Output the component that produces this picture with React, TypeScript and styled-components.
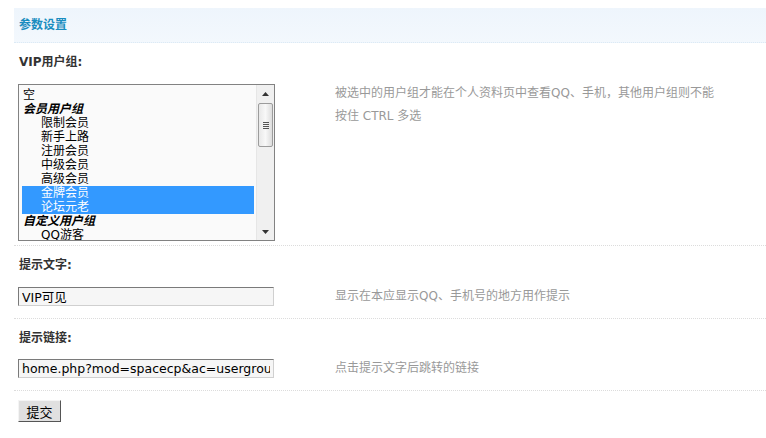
import React from 'react';
import styled, { createGlobalStyle } from 'styled-components';

const GlobalStyle = createGlobalStyle`
  body {
    margin: 0;
    background: #fff;
    font: 12px/1.5 Tahoma, "DejaVu Sans", "Noto Sans CJK SC", sans-serif;
    color: #333;
  }
`;

const Page = styled.div`
  padding: 8px 0 0 14px;
`;

const Header = styled.div`
  height: 34px;
  line-height: 35px;
  padding-left: 5px;
  background: linear-gradient(#eef5fc, #f3f8fd);
  border-bottom: 1px dotted #dceaf5;
  color: #1a8dc0;
  font-weight: bold;
  font-size: 12px;
`;

const Label = styled.div<{ $bottom?: number }>`
  padding: 12px 5px ${p => p.$bottom ?? 15}px;
  line-height: 14px;
  font-weight: bold;
  color: #333;
`;

const FieldRow = styled.div<{ $bottom: number }>`
  display: grid;
  grid-template-columns: 317px 1fr;
  padding: 0 0 ${p => p.$bottom}px 4px;
  border-bottom: 1px dotted #dcdcdc;
`;

const Tip = styled.div`
  margin-top: -2px;
  line-height: 23px;
  color: #999;
`;

const Listbox = styled.div`
  display: flex;
  width: 255px;
  height: 155px;
  border: 1px solid #828282;
  background: #fafafa;
  overflow: hidden;
`;

const Options = styled.div`
  flex: 1;
  padding: 3px 2px 0 3px;
  overflow: hidden;
`;

const Option = styled.div<{ $indent?: boolean; $group?: boolean; $selected?: boolean }>`
  height: 14px;
  line-height: 14px;
  padding-left: ${p => (p.$indent ? 19 : 1)}px;
  white-space: nowrap;
  font-weight: ${p => (p.$group ? 'bold' : 'normal')};
  font-style: ${p => (p.$group ? 'italic' : 'normal')};
  background: ${p => (p.$selected ? '#3399ff' : 'transparent')};
  color: ${p => (p.$selected ? '#fff' : '#000')};
`;

const Scrollbar = styled.div`
  width: 17px;
  display: flex;
  flex-direction: column;
  background: #f0f0f0;
  border-left: 1px solid #e6e6e6;
`;

const ArrowButton = styled.div`
  height: 17px;
  display: flex;
  align-items: center;
  justify-content: center;
`;

const Track = styled.div`
  flex: 1;
  padding-top: 1px;
`;

const Thumb = styled.div`
  height: 42px;
  margin: 0 1px;
  border: 1px solid #9c9c9c;
  border-radius: 2px;
  background: linear-gradient(90deg, #e8e8e8, #f8f8f8 50%, #dcdcdc);
  display: flex;
  flex-direction: column;
  align-items: center;
  justify-content: center;
  gap: 1px;
`;

const Grip = styled.span`
  width: 6px;
  height: 1px;
  background: #555;
`;

const TextInput = styled.input`
  box-sizing: border-box;
  width: 256px;
  height: 19px;
  padding: 0 3px;
  border: 1px solid;
  border-color: #7a7a7a #d0d0d0 #d0d0d0 #7a7a7a;
  background: #f6f6f6;
  font: 12.5px "DejaVu Sans", "Noto Sans CJK SC", sans-serif;
  color: #000;
  outline: none;
`;

const ButtonRow = styled.div`
  padding: 9px 0 0 4px;
`;

const SubmitButton = styled.button`
  width: 43px;
  height: 22px;
  padding: 0;
  background: #e0e0e0;
  border: 1px solid;
  border-color: #f4f4f4 #555 #555 #f4f4f4;
  font: 13px "Noto Sans CJK SC", sans-serif;
  color: #000;
`;

const Arrow = ({ up }: { up?: boolean }) => (
  <svg width="7" height="4" viewBox="0 0 7 4">
    <path d={up ? 'M0 4 L3.5 0 L7 4 Z' : 'M0 0 L3.5 4 L7 0 Z'} fill="#333" />
  </svg>
);

const groups: { text: string; indent?: boolean; group?: boolean; selected?: boolean }[] = [
  { text: '空' },
  { text: '会员用户组', group: true },
  { text: '限制会员', indent: true },
  { text: '新手上路', indent: true },
  { text: '注册会员', indent: true },
  { text: '中级会员', indent: true },
  { text: '高级会员', indent: true },
  { text: '金牌会员', indent: true, selected: true },
  { text: '论坛元老', indent: true, selected: true },
  { text: '自定义用户组', group: true },
  { text: 'QQ游客', indent: true },
];

const App = () => (
  <Page>
    <GlobalStyle />
    <Header>参数设置</Header>

    <Label>VIP用户组:</Label>
    <FieldRow $bottom={4}>
      <Listbox>
        <Options>
          {groups.map(g => (
            <Option key={g.text} $indent={g.indent} $group={g.group} $selected={g.selected}>
              {g.text}
            </Option>
          ))}
        </Options>
        <Scrollbar>
          <ArrowButton><Arrow up /></ArrowButton>
          <Track>
            <Thumb>
              <Grip />
              <Grip />
              <Grip />
              <Grip />
            </Thumb>
          </Track>
          <ArrowButton><Arrow /></ArrowButton>
        </Scrollbar>
      </Listbox>
      <Tip>
        被选中的用户组才能在个人资料页中查看QQ、手机，其他用户组则不能
        <br />
        按住 CTRL 多选
      </Tip>
    </FieldRow>

    <Label>提示文字:</Label>
    <FieldRow $bottom={10}>
      <TextInput defaultValue="VIP可见" />
      <Tip>显示在本应显示QQ、手机号的地方用作提示</Tip>
    </FieldRow>

    <Label $bottom={14}>提示链接:</Label>
    <FieldRow $bottom={10}>
      <TextInput defaultValue="home.php?mod=spacecp&ac=usergroup" />
      <Tip>点击提示文字后跳转的链接</Tip>
    </FieldRow>

    <ButtonRow>
      <SubmitButton>提交</SubmitButton>
    </ButtonRow>
  </Page>
);

export default App;
